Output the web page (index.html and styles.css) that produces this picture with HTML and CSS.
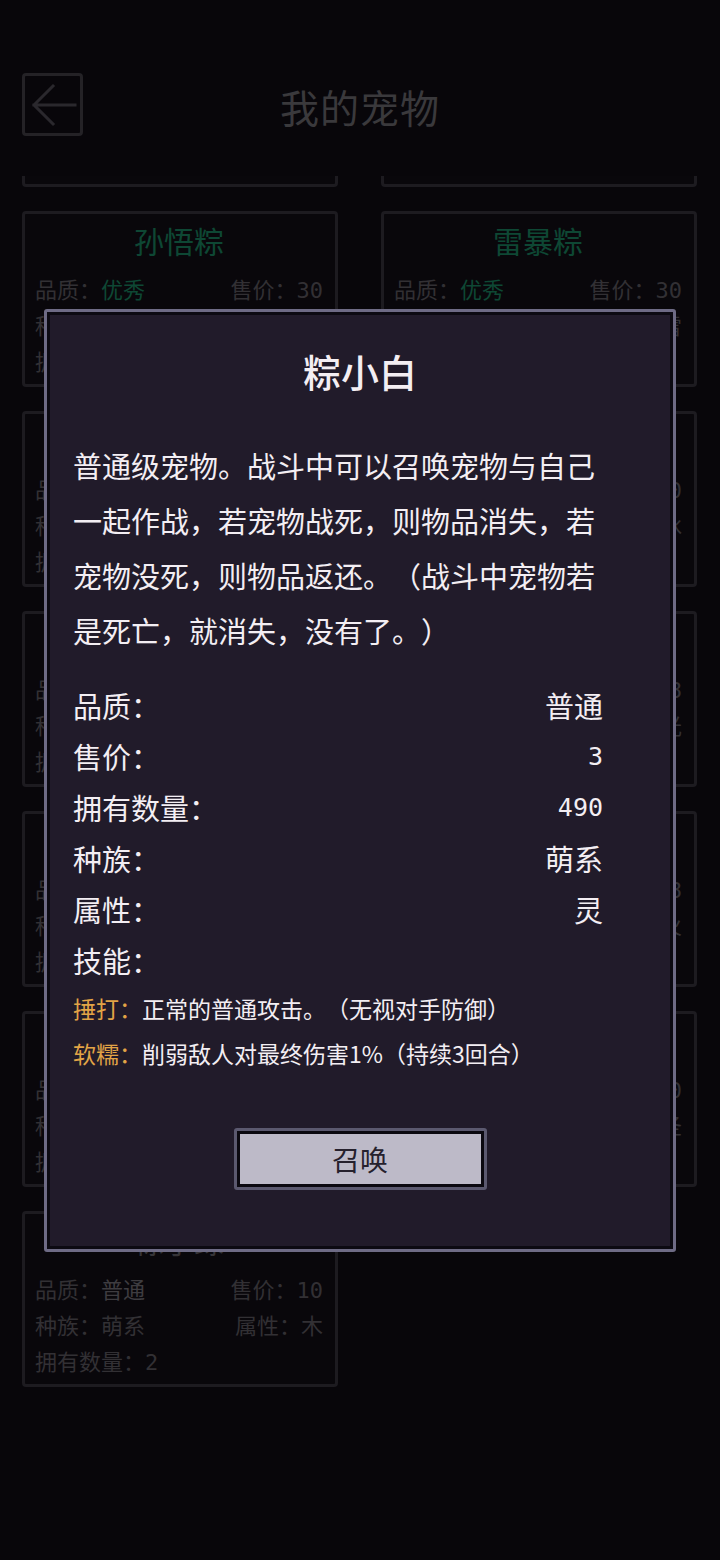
FILE: index.html
```html
<!DOCTYPE html><html>
<head>
  <meta name="viewport" content="width=device-width, initial-scale=1.0">
  <title>我的宠物</title>
  <link rel="stylesheet" href="styles.css">
</head><body>

<div class="page">
  <header class="topbar">
    <button class="back" type="button">
      <svg width="55" height="57" viewBox="0 0 55 57"><path d="M9 29H50M9 29L28 10M9 29L28 48" fill="none" stroke="#2a282d" stroke-width="3" stroke-linecap="square"/></svg>
    </button>
    <h1>我的宠物</h1>
  </header>

  <div class="list">
    <div class="grid">
      <div class="card">
        <div class="name good">齐天粽</div>
        <div class="row"><span>品质：<em class="good">优秀</em></span><span>售价：<i class="num">30</i></span></div>
        <div class="row"><span>种族：神系</span><span>属性：金</span></div>
        <div class="row"><span>拥有数量：<i class="num">1</i></span></div>
      </div>
      <div class="card">
        <div class="name good">风暴粽</div>
        <div class="row"><span>品质：<em class="good">优秀</em></span><span>售价：<i class="num">30</i></span></div>
        <div class="row"><span>种族：神系</span><span>属性：雷</span></div>
        <div class="row"><span>拥有数量：<i class="num">1</i></span></div>
      </div>

      <div class="card">
        <div class="name good">孙悟粽</div>
        <div class="row"><span>品质：<em class="good">优秀</em></span><span>售价：<i class="num">30</i></span></div>
        <div class="row"><span>种族：神系</span><span>属性：金</span></div>
        <div class="row"><span>拥有数量：<i class="num">1</i></span></div>
      </div>
      <div class="card">
        <div class="name good">雷暴粽</div>
        <div class="row"><span>品质：<em class="good">优秀</em></span><span>售价：<i class="num">30</i></span></div>
        <div class="row"><span>种族：神系</span><span>属性：雷</span></div>
        <div class="row"><span>拥有数量：<i class="num">1</i></span></div>
      </div>

      <div class="card">
        <div class="name">火焰粽</div>
        <div class="row"><span>品质：<em>普通</em></span><span>售价：<i class="num">20</i></span></div>
        <div class="row"><span>种族：萌系</span><span>属性：毒</span></div>
        <div class="row"><span>拥有数量：<i class="num">3</i></span></div>
      </div>
      <div class="card">
        <div class="name">冰霜粽</div>
        <div class="row"><span>品质：<em>普通</em></span><span>售价：<i class="num">10</i></span></div>
        <div class="row"><span>种族：萌系</span><span>属性：冰</span></div>
        <div class="row"><span>拥有数量：<i class="num">4</i></span></div>
      </div>

      <div class="card">
        <div class="name">大力粽</div>
        <div class="row"><span>品质：<em>普通</em></span><span>售价：<i class="num">10</i></span></div>
        <div class="row"><span>种族：萌系</span><span>属性：土</span></div>
        <div class="row"><span>拥有数量：<i class="num">2</i></span></div>
      </div>
      <div class="card">
        <div class="name">小甜粽</div>
        <div class="row"><span>品质：<em>普通</em></span><span>售价：<i class="num">8</i></span></div>
        <div class="row"><span>种族：萌系</span><span>属性：光</span></div>
        <div class="row"><span>拥有数量：<i class="num">5</i></span></div>
      </div>

      <div class="card">
        <div class="name">疾风粽</div>
        <div class="row"><span>品质：<em>普通</em></span><span>售价：<i class="num">10</i></span></div>
        <div class="row"><span>种族：萌系</span><span>属性：风</span></div>
        <div class="row"><span>拥有数量：<i class="num">1</i></span></div>
      </div>
      <div class="card">
        <div class="name">暗影粽</div>
        <div class="row"><span>品质：<em>普通</em></span><span>售价：<i class="num">8</i></span></div>
        <div class="row"><span>种族：萌系</span><span>属性：火</span></div>
        <div class="row"><span>拥有数量：<i class="num">2</i></span></div>
      </div>

      <div class="card">
        <div class="name">粽小白</div>
        <div class="row"><span>品质：<em>普通</em></span><span>售价：<i class="num">3</i></span></div>
        <div class="row"><span>种族：萌系</span><span>属性：灵</span></div>
        <div class="row"><span>拥有数量：<i class="num">490</i></span></div>
      </div>
      <div class="card">
        <div class="name">圣光粽</div>
        <div class="row"><span>品质：<em>普通</em></span><span>售价：<i class="num">10</i></span></div>
        <div class="row"><span>种族：萌系</span><span>属性：圣</span></div>
        <div class="row"><span>拥有数量：<i class="num">1</i></span></div>
      </div>

      <div class="card">
        <div class="name">粽小绿</div>
        <div class="row"><span>品质：<em>普通</em></span><span>售价：<i class="num">10</i></span></div>
        <div class="row"><span>种族：萌系</span><span>属性：木</span></div>
        <div class="row"><span>拥有数量：<i class="num">2</i></span></div>
      </div>
    </div>
  </div>
</div>

<div class="overlay">
  <div class="dialog">
    <h2>粽小白</h2>
    <p class="desc">普通级宠物。战斗中可以召唤宠物与自己<br>一起作战，若宠物战死，则物品消失，若<br>宠物没死，则物品返还。（战斗中宠物若<br>是死亡，就消失，没有了。）</p>
    <div class="stats">
      <div class="stat"><span>品质：</span><span>普通</span></div>
      <div class="stat"><span>售价：</span><span class="num">3</span></div>
      <div class="stat"><span>拥有数量：</span><span class="num">490</span></div>
      <div class="stat"><span>种族：</span><span>萌系</span></div>
      <div class="stat"><span>属性：</span><span>灵</span></div>
      <div class="stat"><span>技能：</span><span></span></div>
    </div>
    <p class="skill"><b>捶打：</b>正常的普通攻击。（无视对手防御）</p>
    <p class="skill"><b>软糯：</b>削弱敌人对最终伤害1%（持续3回合）</p>
    <button class="summon" type="button">召唤</button>
  </div>
</div>

</body></html>
```

FILE: styles.css
```css
* { box-sizing: border-box; }
html, body { margin: 0; height: 100%; }
body {
  font-family: "Noto Sans CJK SC", "Noto Sans", sans-serif;
  background: #08060a;
  color: #3a383c;
  overflow: hidden;
  text-spacing-trim: space-all;
}
.num { font-family: "DejaVu Sans Mono", "Liberation Mono", monospace; font-style: normal; }

/* background page (dimmed by the dialog) */
.page { height: 1560px; display: flex; flex-direction: column; }
.topbar {
  height: 176px;
  flex: none;
  display: grid;
  grid-template-columns: 1fr auto 1fr;
  align-items: start;
  padding: 73px 22px 0 22px;
  position: relative;
  z-index: 1;
  background: #08060a;
}
.back {
  width: 61px; height: 63px;
  padding: 0;
  border: 3px solid #242226;
  border-radius: 4px;
  background: transparent;
  display: flex; align-items: center; justify-content: center;
}
.topbar h1 {
  margin: 0;
  font-size: 39px;
  font-weight: 400;
  line-height: 66px;
  color: #3a393c;
  letter-spacing: 1px;
}

.list { flex: 1; overflow: hidden; }
.grid {
  margin-top: -165px;
  display: grid;
  grid-template-columns: 1fr 1fr;
  gap: 24px 43px;
  padding: 0 23px 0 22px;
}
.card {
  height: 176px;
  border: 3px solid #1d1b20;
  border-radius: 4px;
  background: #09070b;
  padding: 8px 12px 6px 10px;
}
.card .name {
  height: 36px;
  text-align: center;
  font-size: 30px;
  line-height: 36px;
  margin-bottom: 12px;
  color: #363438;
}
.card .row {
  height: 36px;
  display: flex;
  justify-content: space-between;
  font-size: 22px;
  line-height: 36px;
  color: #323034;
}
.card em { font-style: normal; color: #3e3c40; }
.good, .card em.good, .card .name.good { color: #0e4734; }

/* dialog */
.overlay {
  position: fixed;
  inset: 0;
  display: flex;
  align-items: center;
  justify-content: center;
}
.dialog {
  width: 632px;
  border: 3px solid #6e6b85;
  border-radius: 3px;
  box-shadow: inset 0 0 0 3px #0c0a12;
  background: #211b2a;
  color: #f3eef3;
  padding: 34px 26px 59px 26px;
}
.dialog h2 {
  margin: 0;
  text-align: center;
  font-size: 38px;
  line-height: 50px;
  font-weight: 500;
}
.desc {
  margin: 42px 0 0 0;
  font-size: 29px;
  line-height: 55px;
  white-space: nowrap;
}
.stats { margin-top: 22px; padding-right: 44px; }
.stat {
  height: 51px;
  display: flex;
  justify-content: space-between;
  font-size: 29px;
  line-height: 51px;
}
.stat .num { font-size: 25px; }
.skill {
  margin: 0;
  height: 45px;
  font-size: 23px;
  line-height: 45px;
  white-space: nowrap;
}
.skill b { font-weight: 400; color: #e2a446; }
.summon {
  display: block;
  margin: 52px auto 0 auto;
  width: 253px;
  height: 62px;
  border: 3px solid #5b596f;
  border-radius: 3px;
  box-shadow: inset 0 0 0 3px #0b0910;
  background: #bdbac8;
  color: #26212d;
  font-family: inherit;
  font-size: 28px;
  line-height: 50px;
  padding: 0;
}
```
